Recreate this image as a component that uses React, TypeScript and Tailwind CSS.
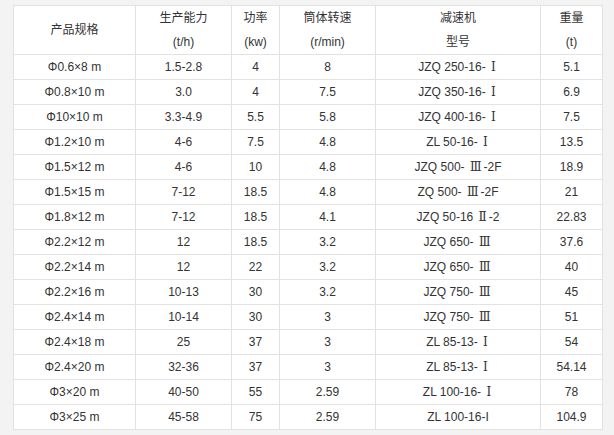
const rows: [string, string, string, string, string, string][] = [
  ["Φ0.6×8 m", "1.5-2.8", "4", "8", "JZQ 250-16- Ⅰ", "5.1"],
  ["Φ0.8×10 m", "3.0", "4", "7.5", "JZQ 350-16- Ⅰ", "6.9"],
  ["Φ10×10 m", "3.3-4.9", "5.5", "5.8", "JZQ 400-16- Ⅰ", "7.5"],
  ["Φ1.2×10 m", "4-6", "7.5", "4.8", "ZL 50-16- Ⅰ", "13.5"],
  ["Φ1.5×12 m", "4-6", "10", "4.8", "JZQ 500- Ⅲ-2F", "18.9"],
  ["Φ1.5×15 m", "7-12", "18.5", "4.8", "ZQ 500- Ⅲ-2F", "21"],
  ["Φ1.8×12 m", "7-12", "18.5", "4.1", "JZQ 50-16 Ⅱ-2", "22.83"],
  ["Φ2.2×12 m", "12", "18.5", "3.2", "JZQ 650- Ⅲ", "37.6"],
  ["Φ2.2×14 m", "12", "22", "3.2", "JZQ 650- Ⅲ", "40"],
  ["Φ2.2×16 m", "10-13", "30", "3.2", "JZQ 750- Ⅲ", "45"],
  ["Φ2.4×14 m", "10-14", "30", "3", "JZQ 750- Ⅲ", "51"],
  ["Φ2.4×18 m", "25", "37", "3", "ZL 85-13- Ⅰ", "54"],
  ["Φ2.4×20 m", "32-36", "37", "3", "ZL 85-13- Ⅰ", "54.14"],
  ["Φ3×20 m", "40-50", "55", "2.59", "ZL 100-16- Ⅰ", "78"],
  ["Φ3×25 m", "45-58", "75", "2.59", "ZL 100-16-I", "104.9"],
];

// 罗马数字用衬线字体，接近原图的宋体效果
function Model({ text }: { text: string }) {
  const parts = text.split(/([ⅠⅡⅢ])/);
  return (
    <>
      {parts.map((p, i) =>
        /[ⅠⅡⅢ]/.test(p) ? (
          <span key={i} className="px-[2px] font-['DejaVu_Serif','Liberation_Serif',serif] text-[12px]">
            {p}
          </span>
        ) : (
          <span key={i}>{p}</span>
        )
      )}
    </>
  );
}

const cell = "border border-[#e2e2e2] text-center align-middle p-0";

export default function App() {
  return (
    <div className="min-h-[435px] w-[614px] bg-[#f3f3f3] pl-[13px] pt-[5px] font-['Liberation_Sans','Noto_Sans_CJK_SC',sans-serif] text-[12px] text-[#333]">
      <table className="w-[590px] table-fixed border-collapse bg-white">
        <colgroup>
          <col className="w-[122px]" />
          <col className="w-[96px]" />
          <col className="w-[48px]" />
          <col className="w-[96px]" />
          <col className="w-[165px]" />
          <col className="w-[62px]" />
        </colgroup>
        <thead>
          <tr className="h-[49px] leading-[24px]">
            <th className={`${cell} font-normal`}>产品规格</th>
            <th className={`${cell} font-normal`}>
              生产能力
              <br />
              (t/h)
            </th>
            <th className={`${cell} font-normal`}>
              功率
              <br />
              (kw)
            </th>
            <th className={`${cell} font-normal`}>
              筒体转速
              <br />
              (r/min)
            </th>
            <th className={`${cell} font-normal`}>
              减速机
              <br />
              型号
            </th>
            <th className={`${cell} font-normal`}>
              重量
              <br />
              (t)
            </th>
          </tr>
        </thead>
        <tbody>
          {rows.map((r) => (
            <tr key={r[0]} className="h-[25px]">
              <td className={cell}>{r[0]}</td>
              <td className={cell}>{r[1]}</td>
              <td className={cell}>{r[2]}</td>
              <td className={cell}>{r[3]}</td>
              <td className={cell}>
                <Model text={r[4]} />
              </td>
              <td className={cell}>{r[5]}</td>
            </tr>
          ))}
        </tbody>
      </table>
    </div>
  );
}
